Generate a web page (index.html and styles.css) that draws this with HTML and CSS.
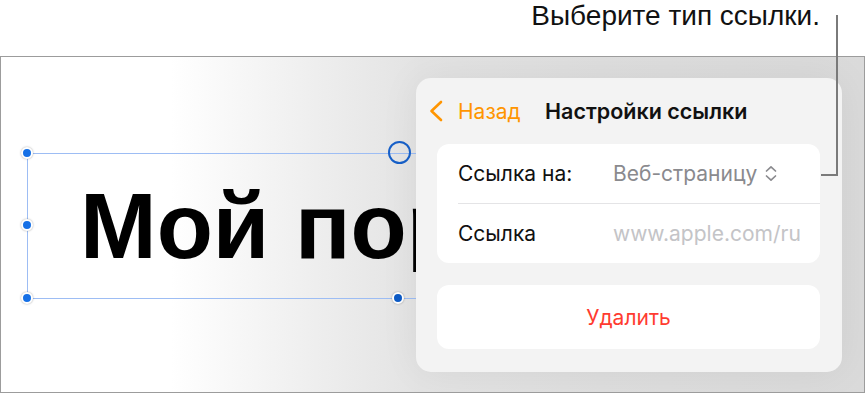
FILE: index.html
```html
<!DOCTYPE html>
<html lang="ru">
<head>
<meta charset="utf-8">
<link rel="stylesheet" href="styles.css">
</head>
<body>
<div class="page">
  <header class="caption">Выберите тип ссылки.</header>
  <div class="leader"></div>
  <section class="frame">
    <div class="textbox">
      <div class="textbox-text">Мой пор</div>
      <span class="handle h-tl"></span>
      <span class="handle h-ml"></span>
      <span class="handle h-bl"></span>
      <span class="handle h-bm"></span>
      <span class="rotate"></span>
    </div>
    <div class="popover">
      <div class="nav">
        <div class="back">
          <svg class="back-icon" width="16" height="22" viewBox="0 0 16 22"><path d="M13 2 L3.5 11 L13 20" fill="none" stroke="#ff9500" stroke-width="2.6" stroke-linecap="round" stroke-linejoin="round"/></svg>
          <span class="back-label">Назад</span>
        </div>
        <div class="nav-title">Настройки ссылки</div>
      </div>
      <div class="card">
        <div class="row">
          <span class="label">Ссылка на:</span>
          <span class="value">Веб-страницу
            <svg class="updown" width="14" height="17" viewBox="0 0 14 17"><path d="M2.5 6 L7 1.8 L11.5 6 M2.5 11 L7 15.2 L11.5 11" fill="none" stroke="#8a8a8e" stroke-width="1.7" stroke-linecap="round" stroke-linejoin="round"/></svg>
          </span>
        </div>
        <div class="sep"></div>
        <div class="row">
          <span class="label">Ссылка</span>
          <span class="placeholder">www.apple.com/ru</span>
        </div>
      </div>
      <div class="card delete">Удалить</div>
    </div>
  </section>
</div>
</body>
</html>
```

FILE: styles.css
```css
* { box-sizing: border-box; }
html, body { margin: 0; padding: 0; background: #fff; }
body { width: 865px; height: 394px; overflow: hidden; font-family: "Inter", "Liberation Sans", sans-serif; }
.page { position: relative; width: 865px; height: 394px; }

.caption {
  height: 56px;
  padding-right: 45px;
  text-align: right;
  font-family: "Liberation Sans", Arial, sans-serif;
  font-size: 28px;
  line-height: 32px;
  color: #111;
}

.leader {
  position: absolute;
  left: 821px;
  top: 15px;
  width: 17px;
  height: 161px;
  border-right: 2px solid #7a7a7a;
  border-bottom: 2px solid #7a7a7a;
  z-index: 5;
}

.frame {
  position: relative;
  height: 337px;
  border: 1px solid #9c9c9c;
  overflow: hidden;
  background: linear-gradient(90deg, #ffffff 0px, #ffffff 170px, #eeeeee 315px, #e3e3e3 420px, #dedede 600px, #dadada 100%);
}

.textbox {
  position: absolute;
  left: 26px;
  top: 96px;
  width: 742px;
  height: 146px;
  border: 1.5px solid #9dbdf4;
}
.textbox-text {
  width: 389px;
  overflow: hidden;
  padding: 26px 0 0 52px;
  font-family: "Liberation Sans", Arial, sans-serif;
  font-weight: 700;
  font-size: 92px;
  line-height: 92px;
  color: #000;
  white-space: nowrap;
}
.handle {
  position: absolute;
  width: 12px;
  height: 12px;
  border-radius: 50%;
  background: #1670e6;
  border: 2px solid #fff;
  box-shadow: 0 0 2px rgba(0,0,0,0.35);
}
.h-tl { left: -7px; top: -7px; }
.h-ml { left: -7px; top: 65px; }
.h-bl { left: -7px; top: 138px; }
.h-bm { left: 364px; top: 138px; background: #0d5bc6; }
.rotate {
  position: absolute;
  left: 360px;
  top: -13px;
  width: 23px;
  height: 23px;
  border-radius: 50%;
  border: 2px solid #1760c9;
  background: transparent;
}

.popover {
  position: absolute;
  left: 415px;
  top: 21px;
  width: 426px;
  height: 294px;
  background: #f3f3f3;
  border-radius: 15px;
  padding: 0 22px 23px 21px;
  display: flex;
  flex-direction: column;
  box-shadow: 0 0 40px rgba(0,0,0,0.06);
  z-index: 2;
}
.nav {
  height: 67px;
  display: flex;
  align-items: center;
  margin-left: -9px;
}
.back {
  display: flex;
  align-items: center;
  width: 117px;
}
.back-icon { margin-right: 14px; }
.back-label {
  color: #ff9500;
  font-size: 21px;
}
.nav-title {
  font-size: 21.5px;
  font-weight: 600;
  color: #111;
}

.card {
  background: #fff;
  border-radius: 12px;
}
.row {
  height: 59px;
  display: grid;
  grid-template-columns: 155px 1fr;
  align-items: center;
  padding-left: 21px;
  font-size: 21px;
}
.label { color: #111; }
.value {
  color: #8a8a8e;
  display: flex;
  align-items: center;
  white-space: nowrap;
}
.updown { margin-left: 7px; }
.placeholder { color: #c4c4c7; white-space: nowrap; }
.sep {
  height: 1px;
  background: #e4e4e6;
  margin-left: 21px;
}
.delete {
  margin-top: 22px;
  height: 64px;
  display: flex;
  align-items: center;
  justify-content: center;
  color: #ff3b30;
  font-size: 21px;
}
```
